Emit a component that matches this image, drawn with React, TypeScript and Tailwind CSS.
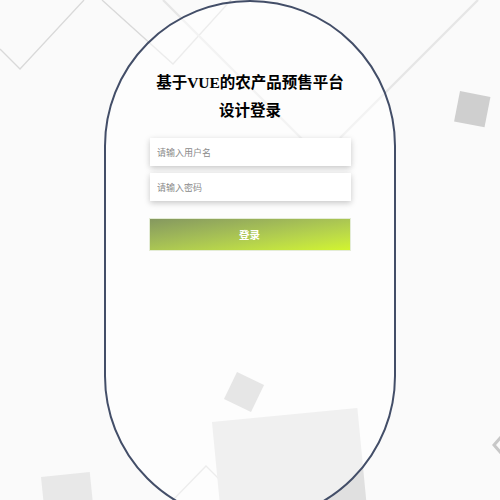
import React from "react";

function Background() {
  return (
    <svg
      className="absolute inset-0"
      width="500"
      height="500"
      viewBox="0 0 500 500"
      xmlns="http://www.w3.org/2000/svg"
    >
      <g fill="none" stroke="#d9d9d9" strokeWidth="1.3">
        <polyline points="0,49 20,69 84,0" />
        <polyline points="102,0 173,64 231,0" />
        <polyline points="172,501 206,466 241,501" />
      </g>
      <g fill="none" stroke="#e6e6e6" strokeWidth="2.2">
        <line x1="163" y1="0" x2="310" y2="147" />
        <line x1="478" y1="0" x2="340" y2="138" />
      </g>
      <polyline points="501,437 494,445 501,453" fill="none" stroke="#c8c8c8" strokeWidth="3" />
      <rect x="460" y="91" width="31" height="31" fill="#cfcfcf" transform="rotate(11 460 91)" />
      <rect x="237" y="372" width="30" height="30" fill="#cccccc" transform="rotate(25.7 237 372)" />
      <rect x="212" y="422" width="146" height="146" fill="#e0e0e0" transform="rotate(-5.5 212 422)" />
      <rect x="41" y="477" width="49" height="49" fill="#e8e8e8" transform="rotate(-5.8 41 477)" />
    </svg>
  );
}

export default function App() {
  return (
    <div className="relative w-[500px] h-[500px] overflow-hidden bg-[#fafafa]">
      <Background />
      <div className="relative flex justify-center">
        <div className="w-[292px] h-[522px] rounded-full border-2 border-[#434e68] bg-white/50 flex flex-col items-center pt-[67px]">
          <h1
            className="text-[15.5px] leading-[28px] font-bold text-black text-center"
            style={{ fontFamily: '"Liberation Serif", "Noto Sans CJK SC", serif' }}
          >
            基于VUE的农产品预售平台
            <br />
            设计登录
          </h1>
          <div
            className="mt-[13px] w-[201px] ml-[1px] flex flex-col gap-[7px]"
            style={{ fontFamily: '"Noto Sans CJK SC", "Noto Sans", sans-serif' }}
          >
            <input
              className="h-[28px] w-full bg-white px-[7px] text-[9px] text-[#333] placeholder:text-[#8a8a8a] outline-none shadow-[0_2px_6px_rgba(0,0,0,0.22)]"
              placeholder="请输入用户名"
            />
            <input
              type="password"
              className="h-[28px] w-full bg-white px-[7px] text-[9px] text-[#333] placeholder:text-[#8a8a8a] outline-none shadow-[0_2px_6px_rgba(0,0,0,0.22)]"
              placeholder="请输入密码"
            />
          </div>
          <button
            className="mt-[17px] w-[202px] h-[33px] mr-[1px] border border-[#e4ecd6] bg-gradient-to-br from-[#85985f] to-[#d2f52c] text-white text-[10.5px] font-bold"
            style={{ fontFamily: '"Noto Sans CJK SC", "Noto Sans", sans-serif' }}
          >
            登录
          </button>
        </div>
      </div>
    </div>
  );
}
